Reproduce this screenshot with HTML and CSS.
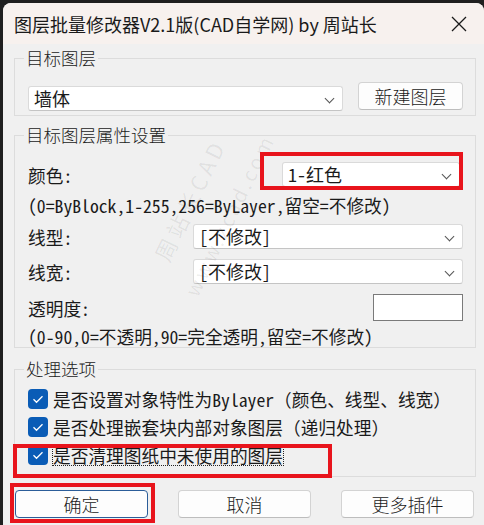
FILE: index.html
```html
<!DOCTYPE html>
<html lang="zh-CN">
<head>
  <meta charset="UTF-8" />
  <title>图层批量修改器</title>
  <link rel="stylesheet" href="styles.css">
</head>
<body>

<div class="window">
  <!-- 标题栏 -->
  <div class="titlebar">
    <span class="title">图层批量修改器V2.1版(CAD自学网) by 周站长</span>
    <svg class="close" width="16" height="16" viewBox="0 0 16 16">
      <path d="M1 1 L15 15 M15 1 L1 15" stroke="#1a1a1a" stroke-width="1.3" fill="none" />
    </svg>
  </div>

  <div class="content">
    <!-- 目标图层 -->
    <fieldset class="group g1">
      <legend>目标图层</legend>
      <div class="row">
        <div class="combo combo-layer"><span class="sans">墙体</span><i class="chev"></i></div>
        <button class="btn btn-new">新建图层</button>
      </div>
    </fieldset>

    <!-- 属性设置 -->
    <fieldset class="group g2">
      <legend>目标图层属性设置</legend>
      <div class="field f-color">
        <span class="label song">颜色:</span>
        <div class="combo combo-color song">1-红色<i class="chev"></i></div>
      </div>
      <p class="hint song h1">(0=ByBlock,1-255,256=ByLayer,留空=不修改)</p>
      <div class="field f-type">
        <span class="label song">线型:</span>
        <div class="combo combo-long song">[不修改]<i class="chev"></i></div>
      </div>
      <div class="field f-width">
        <span class="label song">线宽:</span>
        <div class="combo combo-long song">[不修改]<i class="chev"></i></div>
      </div>
      <div class="field f-alpha">
        <span class="label song">透明度:</span>
        <div class="textbox"></div>
      </div>
      <p class="hint song h2">(0-90,0=不透明,90=完全透明,留空=不修改)</p>
    </fieldset>

    <!-- 处理选项 -->
    <fieldset class="group g3">
      <legend>处理选项</legend>
      <div class="check"><span class="box"></span><span class="song">是否设置对象特性为Bylayer（颜色、线型、线宽）</span></div>
      <div class="check"><span class="box"></span><span class="song">是否处理嵌套块内部对象图层（递归处理）</span></div>
      <div class="check"><span class="box"></span><span class="song focus">是否清理图纸中未使用的图层</span></div>
    </fieldset>

    <div class="buttons">
      <button class="btn btn-main default">确定</button>
      <button class="btn btn-main">取消</button>
      <button class="btn btn-main">更多插件</button>
    </div>
  </div>

  <!-- 水印 -->
  <div class="watermark wm1">周站长CAD</div>
  <div class="watermark wm2">www.zcad.com</div>

  <!-- 标注红框 -->
  <div class="redbox rb-color"></div>
  <div class="redbox rb-clean"></div>
  <div class="redbox rb-ok"></div>
</div>

</body>
</html>
```

FILE: styles.css
```css
body {
  margin: 0;
  background: #1f1f1f;
  width: 484px;
  height: 525px;
  overflow: hidden;
  font-family: "Noto Sans CJK SC", "Noto Sans", sans-serif;
  color: #1a1a1a;
}

.window {
  position: relative;
  margin: 3px 0 0 3px;
  width: 481px;
  height: 522px;
  background: #f0f0f0;
  border-radius: 8px 8px 0 0;
  overflow: hidden;
}

.titlebar {
  height: 41px;
  background: #f7f1ee;
  display: flex;
  align-items: center;
  justify-content: space-between;
  padding: 0 17px 0 11px;
}

.title {
  font-size: 18px;
  line-height: 24px;
}

.content {
  padding: 0 5px 0 11px;
}

.sans {
  font-family: "Noto Sans CJK SC", sans-serif;
}

.song {
  font-family: "Noto Sans Mono CJK SC", "Noto Sans CJK SC", monospace;
  font-size: 17.7px;
  font-weight: 300;
  line-height: 20px;
}

/* 分组框 */
.group {
  width: 462px;
  box-sizing: border-box;
  min-width: 0;
  margin: 0;
  border: 1px solid #dcdcdc;
  padding: 0 12px 0 13px;
}

.group legend {
  margin-left: -4px;
  padding: 0 2px;
  height: 20px;
  font-size: 17.5px;
  line-height: 20px;
  font-weight: 300;
}

.g1 { margin-top: 4px; padding-top: 14px; padding-bottom: 4px; }
.g2 { margin-top: 9px; padding-top: 17px; padding-bottom: 0; }
.g3 { margin-top: 11px; padding-top: 6px; padding-bottom: 7px; }

.row {
  display: flex;
  align-items: flex-start;
  justify-content: space-between;
}

/* 下拉框 */
.combo {
  position: relative;
  box-sizing: border-box;
  height: 25px;
  background: #fff;
  border: 1px solid #dadada;
  border-bottom-color: #c4c4c4;
  border-radius: 3px;
  padding-left: 5px;
  font-size: 18px;
  line-height: 23px;
  display: flex;
  align-items: center;
}

.chev {
  position: absolute;
  right: 9px;
  top: 8px;
  width: 6px;
  height: 6px;
  border-right: 1.2px solid #555;
  border-bottom: 1.2px solid #555;
  transform: rotate(45deg);
}

.combo-layer {
  width: 315px;
  margin-top: 4px;
}

.combo-color {
  width: 178px;
  margin-right: 3px;
}

.combo-long {
  width: 270px;
}

.textbox {
  box-sizing: border-box;
  width: 90px;
  height: 27px;
  background: #fff;
  border: 1px solid #7a7a7a;
}

/* 按钮 */
.btn {
  box-sizing: border-box;
  height: 28px;
  background: #fdfdfd;
  border: 1px solid #d3d3d3;
  border-bottom-color: #bdbdbd;
  border-radius: 4px;
  font-family: "Noto Sans CJK SC", sans-serif;
  font-size: 18px;
  font-weight: 300;
  line-height: 24px;
  color: #1a1a1a;
  padding: 0;
}

.btn-new {
  width: 105px;
}

.btn-main {
  width: 133px;
}

.btn.default {
  border-color: #2b5d99;
}

.buttons {
  display: flex;
  justify-content: space-between;
  box-sizing: border-box;
  width: 462px;
  margin-top: 13px;
  padding: 0 2px 0 1px;
}

/* 属性行 */
.field {
  display: flex;
  align-items: center;
  justify-content: space-between;
}

.f-type { margin-top: 7px; }
.f-width { margin-top: 10px; }
.f-alpha { margin-top: 10px; }

.hint {
  margin: 0;
  white-space: nowrap;
}

.h1 { margin-top: 6px; line-height: 24px; }
.h2 { margin-top: 4px; line-height: 22px; }

/* 复选框 */
.check {
  display: flex;
  align-items: center;
  gap: 5px;
  height: 28px;
  white-space: nowrap;
}

.check .box {
  width: 20px;
  height: 20px;
  border-radius: 4px;
  background: #0a5cb6 url("data:image/svg+xml,%3Csvg xmlns='http://www.w3.org/2000/svg' viewBox='0 0 20 20'%3E%3Cpath d='M5.5 10.3 L8.5 13.3 L14.5 7.2' stroke='white' stroke-width='1.3' fill='none'/%3E%3C/svg%3E") center / 20px 20px no-repeat;
  flex-shrink: 0;
}

.check .song {
  line-height: 19px;
}

.focus {
  outline: 1px dotted #222;
  outline-offset: 0;
}

/* 水印 */
.watermark {
  position: absolute;
  transform-origin: 0 50%;
  transform: rotate(-64deg);
  color: rgba(0, 0, 0, 0.07);
  font-size: 22px;
  white-space: nowrap;
  pointer-events: none;
}

.wm1 { left: 157px; top: 240px; letter-spacing: 4px; }
.wm2 { left: 187px; top: 277px; letter-spacing: 3px; font-size: 20px; }

/* 红框标注 */
.redbox {
  position: absolute;
  box-sizing: border-box;
  border: 4px solid #e8141c;
}

.rb-color { left: 257px; top: 149px; width: 203px; height: 38px; }
.rb-clean { left: 10px; top: 441px; width: 319px; height: 34px; }
.rb-ok { left: 7px; top: 480px; width: 145px; height: 40px; }
```
